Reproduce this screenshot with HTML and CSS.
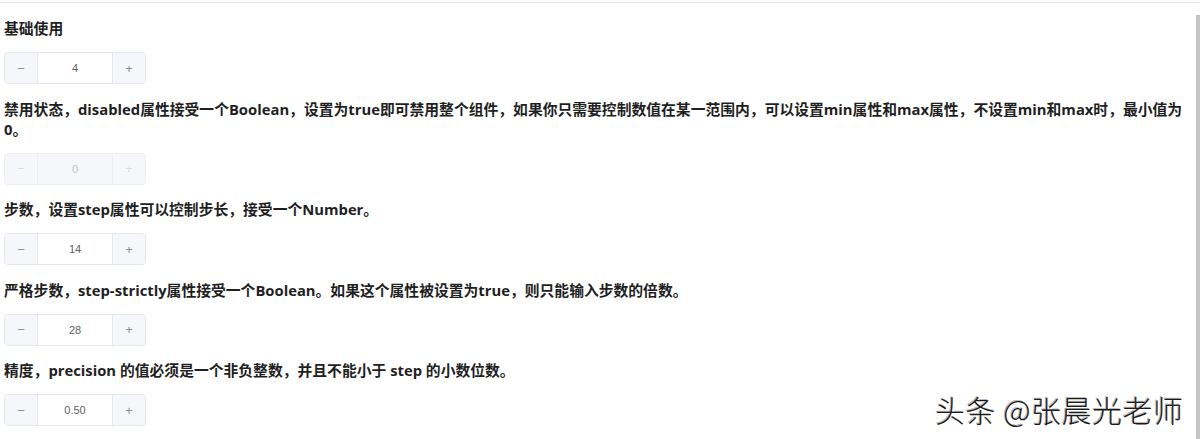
FILE: index.html
```html
<!DOCTYPE html>
<html lang="en">
<head>
    <meta charset="UTF-8">
    <meta name="viewport" content="width=device-width, initial-scale=1.0">
    <title>InputNumber 计数器</title>
    <link rel="stylesheet" href="styles.css">
</head>
<body>
    <div class="page">
        <div class="demo">
            <h3>基础使用</h3>
            <div class="input-number">
                <span class="btn">&minus;</span>
                <span class="value">4</span>
                <span class="btn">+</span>
            </div>
        </div>
        <div class="demo">
            <h3>禁用状态，disabled属性接受一个Boolean，设置为true即可禁用整个组件，如果你只需要控制数值在某一范围内，可以设置min属性和max属性，不设置min和max时，最小值为<br>0。</h3>
            <div class="input-number disabled">
                <span class="btn">&minus;</span>
                <span class="value">0</span>
                <span class="btn">+</span>
            </div>
        </div>
        <div class="demo">
            <h3>步数，设置step属性可以控制步长，接受一个Number。</h3>
            <div class="input-number">
                <span class="btn">&minus;</span>
                <span class="value">14</span>
                <span class="btn">+</span>
            </div>
        </div>
        <div class="demo">
            <h3>严格步数，step-strictly属性接受一个Boolean。如果这个属性被设置为true，则只能输入步数的倍数。</h3>
            <div class="input-number">
                <span class="btn">&minus;</span>
                <span class="value">28</span>
                <span class="btn">+</span>
            </div>
        </div>
        <div class="demo">
            <h3>精度，precision 的值必须是一个非负整数，并且不能小于 step 的小数位数。</h3>
            <div class="input-number">
                <span class="btn">&minus;</span>
                <span class="value">0.50</span>
                <span class="btn">+</span>
            </div>
        </div>
    </div>
    <div class="scrollbar"></div>
    <div class="watermark">头条 @张晨光老师</div>
</body>
</html>
```

FILE: styles.css
```css
body {
    margin: 0;
    padding: 0;
    height: 100vh;
    overflow: hidden;
    background: #fff;
    font-family: 'Open Sans', 'Noto Sans CJK SC', sans-serif;
    color: #1f1f1f;
}

.page {
    border-top: 1px solid #e6e6e6;
    margin-top: 2px;
    padding: 15px 6px 0 4px;
}

.demo h3 {
    font-size: 14.8px;
    font-weight: 700;
    line-height: 20px;
    margin: 0 0 14px;
}

.input-number {
    display: flex;
    width: 140px;
    height: 30px;
    border: 1px solid #e4e7ed;
    border-radius: 4px;
    margin-bottom: 14.5px;
    overflow: hidden;
}

.input-number .btn {
    width: 32px;
    display: flex;
    align-items: center;
    justify-content: center;
    background: #f5f7fa;
    color: #8c8f96;
    font-family: 'Liberation Sans', sans-serif;
    font-size: 13px;
}

.input-number .btn:first-child {
    border-right: 1px solid #e4e7ed;
}

.input-number .btn:last-child {
    border-left: 1px solid #e4e7ed;
}

.input-number .value {
    flex: 1;
    display: flex;
    align-items: center;
    justify-content: center;
    font-family: 'Liberation Sans', sans-serif;
    font-size: 11px;
    color: #606266;
}

.input-number.disabled {
    background: #f5f7fa;
    border-color: #eceef2;
}

.input-number.disabled .btn {
    color: #d8dbe0;
}

.input-number.disabled .btn:first-child,
.input-number.disabled .btn:last-child {
    border-color: #eceef2;
}

.input-number.disabled .value {
    color: #c0c4cc;
}

.scrollbar {
    position: absolute;
    top: 15px;
    right: 0;
    width: 4px;
    bottom: 0;
    background: #c4c4c4;
}

.watermark {
    position: absolute;
    left: 935px;
    top: 387px;
    font-family: 'Noto Sans CJK SC', sans-serif;
    font-weight: 300;
    font-size: 30px;
    color: #1a1a1a;
    text-shadow: 1px 1px 0 #fff, -1px -1px 0 #bbb;
    letter-spacing: 0.5px;
}
```
